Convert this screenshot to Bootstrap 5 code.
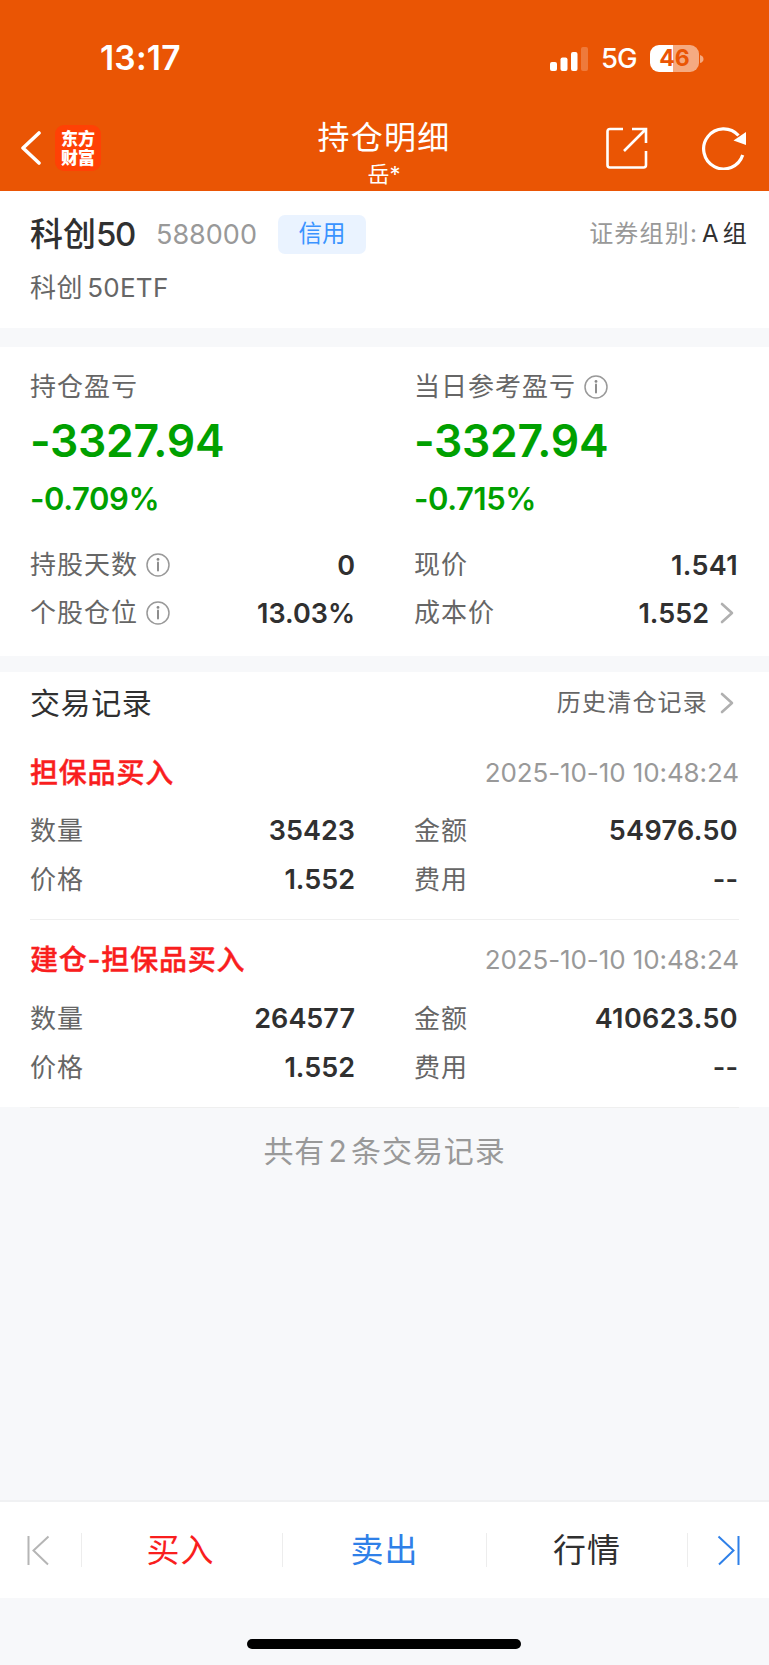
<!DOCTYPE html>
<html lang="zh-CN">
<head>
<meta charset="utf-8">
<meta name="viewport" content="width=device-width, initial-scale=1">
<title>持仓明细</title>
<link href="https://cdn.jsdelivr.net/npm/bootstrap@5.3.0/dist/css/bootstrap.min.css" rel="stylesheet">
<style>
  body{font-family:Inter,"Noto Sans CJK SC",sans-serif;background:#f7f8fa;color:#303030;line-height:1;min-height:1665px;white-space:nowrap}
  svg{display:block;flex:none}
  .app-header{background:#ea5504;height:191px;color:#fff}
  .status-row{height:115px;padding:2px 65px 0 100px}
  .clock{font-size:33.5px;font-weight:600;letter-spacing:.2px}
  .net{font-size:27.5px;font-weight:500;letter-spacing:-1px;margin-left:12px;width:36px}
  .batt{width:49px;height:27px;border-radius:9px;background:linear-gradient(90deg,#fff 47%,#f5aa81 47%);color:#ea5504;font-size:23px;font-weight:700;margin-left:13px}
  .nav-row{height:76px;padding:0 22px 0 21px}
  .nav-side{width:200px;height:66px}
  .app-logo{width:46px;height:46px;border-radius:9px;background:#ff4105;font:900 17px/19px "Noto Sans CJK SC",sans-serif;margin-left:14px;padding-top:3px}
  .ttl{font-size:32px;letter-spacing:1.2px;line-height:46px}
  .sub-ttl{font-size:22px;line-height:26px}
  .panel{background:#fff;padding-left:30px;padding-right:30px}
  .p-sec{height:137px;padding-top:19px;padding-right:21px}
  .fund{font-size:33px;font-weight:500;width:126px}
  .fund span{letter-spacing:-1.4px}
  .code{font-size:27px;color:#999;width:122px;font-weight:400}
  .tagx{width:88px;height:39px;border-radius:7px;background:#eaf3ff;color:#3a93ff;font-size:23.5px}
  .grp{font-size:24px;letter-spacing:1.2px;color:#999}
  .grp-v{color:#303030;word-spacing:-5px}
  .fullname{font-size:26px;color:#666;height:60px;letter-spacing:.6px;word-spacing:-4px}
  .fullname span{letter-spacing:.3px}
  .p-pl{height:309px;margin-top:19px;padding-top:16px}
  .half{width:325px;margin-right:59px}
  .half-r{width:324px}
  .lbl{font-size:26px;letter-spacing:1px;color:#666}
  .big{font-size:44.5px;font-weight:600;color:#00a000;height:60px;letter-spacing:-.3px}
  .pct{font-size:31px;font-weight:600;color:#00a000;height:54px;letter-spacing:-.4px}
  .h48{height:48px}
  .h49{height:49px}
  .val{font-size:27px;font-weight:600}
  .val-w{letter-spacing:.35px}
  .p-rec{height:435px;margin-top:16px;padding-top:7px}
  .sec-ttl{font-size:30px;letter-spacing:.6px}
  .hist{font-size:24px;letter-spacing:1.2px;color:#666}
  .op{font-size:28px;font-weight:500;letter-spacing:.8px;color:#f91e1e;-webkit-text-stroke:.4px #f91e1e}
  .dt{font-size:26px;color:#999;letter-spacing:-.1px}
  .rec-head{height:79px;padding-top:12px}
  .rec-head2{height:74px;padding-top:5px}
  .rec-body{padding-bottom:15px;border-bottom:1px solid #efefef}
  .total{height:86px;padding-top:2px;font-size:30px;letter-spacing:.9px;color:#999;word-spacing:-6px}
  .actions{height:98px;margin-top:307px;border-top:2px solid #f0f1f3;background:#fff;font-size:33px;letter-spacing:1px}
  .actions>div{height:96px}
  .actions>.sep{width:1px;height:34px;background:#ededed}
  .home{width:274px;height:10px;border-radius:5px;background:#000;margin:41px 0 0 247px}
</style>
</head>
<body>
<svg width="0" height="0" class="position-absolute">
  <symbol id="info" viewBox="0 0 24 24"><circle cx="12" cy="12" r="11" fill="none" stroke="#999" stroke-width="1.5"/><path d="M12 9.5V17.5" stroke="#888" stroke-width="1.9" stroke-linecap="round"/><circle cx="12" cy="6.4" r="1.4" fill="#888"/></symbol>
  <symbol id="more" viewBox="0 0 14 22"><path d="M2 2L12 11L2 20" fill="none" stroke="#b0b0b0" stroke-width="2.6" stroke-linecap="round" stroke-linejoin="round"/></symbol>
</svg>

<header class="app-header">
  <div class="status-row d-flex align-items-center">
    <span class="clock me-auto">13:17</span>
    <svg width="39" height="26" viewBox="0 0 39 26" fill="#fff"><rect x="0" y="16" width="7" height="9" rx="2"/><rect x="10.500" y="11.500" width="7" height="13.500" rx="2"/><rect x="21" y="6" width="6.500" height="19" rx="2"/><rect x="31" y="1" width="7" height="24" rx="2" opacity=".22"/></svg>
    <span class="net">5G</span>
    <span class="batt d-flex align-items-center justify-content-center">46</span>
    <svg width="4" height="10" viewBox="0 0 4 10" style="margin:0 0 0 1px"><path d="M0 1Q3.500 2 3.500 5T0 9Z" fill="#f5aa81"/></svg>
  </div>
  <div class="nav-row d-flex justify-content-between">
    <div class="nav-side d-flex align-items-center">
      <svg width="20" height="34" viewBox="0 0 20 34"><path d="M18 2L2 17L18 32" fill="none" stroke="#fff" stroke-width="3.600" stroke-linecap="round" stroke-linejoin="round"/></svg>
      <div class="app-logo text-center">东方<br>财富</div>
    </div>
    <div class="text-center"><div class="ttl">持仓明细</div><div class="sub-ttl">岳*</div></div>
    <div class="nav-side d-flex align-items-center justify-content-end">
      <svg width="42" height="43" viewBox="0 0 42 43" fill="none" stroke="#fff" stroke-width="2.600"><path d="M17 2H4Q1.500 2 1.500 4.500V38Q1.500 40.500 4 40.500H37.500Q40 40.500 40 38V24M26 2H40V16M40 2L18 24"/></svg>
      <svg width="45" height="44" viewBox="0 0 45 44" style="margin-left:54px"><path d="M40.700 29A20 20 0 1 1 36.500 9.500" fill="none" stroke="#fff" stroke-width="3.200"/><path d="M44 6V19L31.500 14.500Z" fill="#fff"/></svg>
    </div>
  </div>
</header>

<section class="panel p-sec">
  <div class="d-flex align-items-center h48">
    <span class="fund">科创<span>50</span></span><span class="code">588000</span>
    <span class="tagx d-flex align-items-center justify-content-center">信用</span>
    <span class="grp ms-auto">证券组别:<span class="grp-v ms-1">A 组</span></span>
  </div>
  <div class="fullname d-flex align-items-center"><div>科创 <span>50ETF</span></div></div>
</section>

<section class="panel p-pl d-flex">
  <div class="half">
    <div class="lbl h48 d-flex align-items-center">持仓盈亏</div>
    <div class="big d-flex align-items-center">-3327.94</div>
    <div class="pct d-flex align-items-center">-0.709%</div>
    <div class="pt-3">
      <div class="h48 d-flex align-items-center"><span class="lbl">持股天数</span><svg width="24" height="24" class="ms-2"><use href="#info"/></svg><span class="val ms-auto">0</span></div>
      <div class="h48 d-flex align-items-center"><span class="lbl">个股仓位</span><svg width="24" height="24" class="ms-2"><use href="#info"/></svg><span class="val ms-auto">13.03%</span></div>
    </div>
  </div>
  <div class="half-r">
    <div class="lbl h48 d-flex align-items-center">当日参考盈亏<svg width="24" height="24" class="ms-2"><use href="#info"/></svg></div>
    <div class="big d-flex align-items-center">-3327.94</div>
    <div class="pct d-flex align-items-center">-0.715%</div>
    <div class="pt-3">
      <div class="h48 d-flex align-items-center justify-content-between"><span class="lbl">现价</span><span class="val val-w">1.541</span></div>
      <div class="h48 d-flex align-items-center"><span class="lbl">成本价</span><span class="val ms-auto">1.552</span><svg width="14" height="22" style="margin:0 4px 0 11px"><use href="#more"/></svg></div>
    </div>
  </div>
</section>

<section class="panel p-rec">
  <div class="h48 d-flex align-items-center"><span class="sec-ttl">交易记录</span><span class="hist ms-auto">历史清仓记录</span><svg width="14" height="22" style="margin:0 5px 0 12px"><use href="#more"/></svg></div>
  <div class="rec-head d-flex align-items-center justify-content-between"><span class="op">担保品买入</span><span class="dt">2025-10-10 10:48:24</span></div>
  <div class="d-flex rec-body">
    <div class="half"><div class="h49 d-flex align-items-center justify-content-between"><span class="lbl">数量</span><span class="val">35423</span></div><div class="h49 d-flex align-items-center justify-content-between"><span class="lbl">价格</span><span class="val">1.552</span></div></div>
    <div class="half-r"><div class="h49 d-flex align-items-center justify-content-between"><span class="lbl">金额</span><span class="val val-w">54976.50</span></div><div class="h49 d-flex align-items-center justify-content-between"><span class="lbl">费用</span><span class="val">--</span></div></div>
  </div>
  <div class="rec-head2 d-flex align-items-center justify-content-between"><span class="op">建仓-担保品买入</span><span class="dt">2025-10-10 10:48:24</span></div>
  <div class="d-flex rec-body">
    <div class="half"><div class="h49 d-flex align-items-center justify-content-between"><span class="lbl">数量</span><span class="val">264577</span></div><div class="h49 d-flex align-items-center justify-content-between"><span class="lbl">价格</span><span class="val">1.552</span></div></div>
    <div class="half-r"><div class="h49 d-flex align-items-center justify-content-between"><span class="lbl">金额</span><span class="val val-w">410623.50</span></div><div class="h49 d-flex align-items-center justify-content-between"><span class="lbl">费用</span><span class="val">--</span></div></div>
  </div>
</section>

<div class="total d-flex align-items-center justify-content-center">共有 2 条交易记录</div>

<nav class="actions d-flex align-items-center">
  <div class="d-flex align-items-center" style="width:81px;padding-left:26px"><svg width="24" height="31" viewBox="0 0 24 31" fill="none" stroke="#b5b5b5" stroke-width="2"><path d="M2.500 1V30M22.500 1.500L7.500 15.500L22 29.500"/></svg></div>
  <div class="sep"></div>
  <div class="d-flex align-items-center justify-content-center" style="width:200px;padding-right:3px;color:#f91e1e">买入</div>
  <div class="sep"></div>
  <div class="d-flex align-items-center justify-content-center" style="width:203px;color:#2f80e8">卖出</div>
  <div class="sep"></div>
  <div class="d-flex align-items-center justify-content-center" style="width:200px">行情</div>
  <div class="sep"></div>
  <div class="d-flex align-items-center" style="padding-left:29px"><svg width="24" height="31" viewBox="0 0 24 31" fill="none" stroke="#2f80e8" stroke-width="2"><path d="M21.500 1V30M1.500 1.500L16.500 15.500L2 29.500"/></svg></div>
</nav>
<div class="home"></div>
<script src="https://cdn.jsdelivr.net/npm/bootstrap@5.3.0/dist/js/bootstrap.bundle.min.js"></script>
</body>
</html>
